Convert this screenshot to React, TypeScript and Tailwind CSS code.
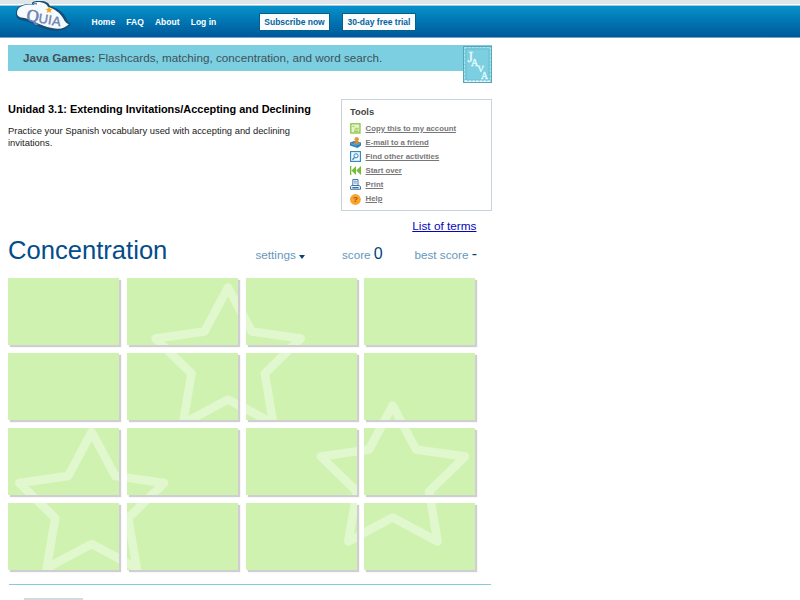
import React from "react";

const STARS = [
  { x: 228, y: 287.5 },
  { x: 91.7, y: 432 },
  { x: 393, y: 405.5 },
];
const COLS = [8, 127, 245.7, 364.4];
const ROWS = [278, 353, 428, 503];

function Logo() {
  return (
    <svg className="absolute left-[14px] top-0" width="60" height="34" viewBox="0 0 60 34">
      <path d="M2 13C2 5 10 4 18 4C18 1 21 1 26 1C32 1 35 3 36 6C46 9 51 14 53 20C54 23 56 23 57 24C52 30 46 32 37 30.5C24 28 16 21 7 20C3 19 2 17 2 13Z" fill="#154f79" />
      <path d="M3 13C3 6 11 4 19 4.500C19 2 23 1.500 27 2.200C31 3 33 4.500 34 7C41 9 46 13 49 18C51 22 53 24 55 24C51 28 46 30 38 28C25 26 17 18 7 17.500C4 17 3 15 3 13Z" fill="#f7fafc" />
      <path d="M19 5C19 3.500 21 3.500 23 4" fill="none" stroke="#154f79" strokeWidth="1" />
      <g fill="#6c84b4" stroke="#6c84b4">
        <text x="12" y="20.5" fontSize="17" fontFamily="Liberation Serif, serif" strokeWidth=".6" transform="rotate(8 12 20)">Q</text>
        <g fontFamily="Liberation Sans, sans-serif" fontSize="13" strokeWidth=".4">
          <text x="24" y="22.500" transform="rotate(9 24 22)">U</text>
          <text x="33.5" y="24" transform="rotate(9 33 24)">I</text>
          <text x="37.5" y="25" transform="rotate(9 37 25)">A</text>
        </g>
      </g>
      <path d="M35 6.500l1 2.300 2.500.1-1.900 1.700.7 2.500-2.300-1.300-2.200 1.300.6-2.500-1.900-1.700 2.500-.1z" fill="#f5a51c" />
    </svg>
  );
}

function JavaStamp() {
  return (
    <svg className="absolute right-0 top-px" width="29" height="37" viewBox="0 0 29 37">
      <rect width="29" height="37" fill="#7bcfe1" />
      <rect x="1.5" y="1.5" width="26" height="34" fill="none" stroke="#a9e4ef" strokeWidth="1.5" strokeDasharray="2.5 1.2" />
      <path d="M2 35H27" stroke="#e9fbff" strokeWidth="2" strokeDasharray="2.5 1.2" />
      <rect x=".5" y=".5" width="28" height="36" fill="none" stroke="#5aa4b8" />
      <rect x="3" y="3" width="23" height="31" fill="none" stroke="#6ab8cb" strokeWidth=".8" />
      <g fill="#e8fcff" stroke="#e8fcff" strokeWidth=".3" fontFamily="Liberation Serif, serif">
        <text x="4.5" y="15.5" fontSize="14">J</text>
        <text x="8" y="20" fontSize="10">A</text>
        <text x="14.500" y="25.500" fontSize="9">V</text>
        <text x="18" y="32.500" fontSize="11" textLength="7" lengthAdjust="spacingAndGlyphs">A</text>
      </g>
    </svg>
  );
}

const icons: Record<string, React.ReactNode> = {
  copy: (
    <g>
      <rect x=".8" y=".8" width="9.2" height="9.2" fill="#e6f5c8" stroke="#7fc241" strokeWidth="1.2" />
      <path d="M2.5 3.5H4.5M5 5.3H8.5M4 7H8.5M4 8.6H8.5" stroke="#8dbb3a" strokeWidth=".8" />
    </g>
  ),
  mail: (
    <g>
      <path d="M0 5.5L4 4L11 5.5V8.5L7.5 11L0 8.5Z" fill="#287fc0" />
      <path d="M1 6.5L6 8.3L10 6.5" stroke="#7dbde6" strokeWidth=".7" fill="none" />
      <circle cx="6.7" cy="2.2" r="2.2" fill="#e99b2f" />
      <path d="M5.5 3.8H8.2L8.8 6.5L6 7.5L2.5 6L5.6 5.6Z" fill="#dc8b25" />
    </g>
  ),
  find: (
    <g fill="none" stroke="#2f84b7">
      <rect x=".6" y=".6" width="9.8" height="9.8" fill="#f1faff" strokeWidth="1.1" />
      <circle cx="6" cy="4.8" r="2.1" />
      <path d="M4.6 6.4L2.5 8.7" strokeWidth="1.3" />
    </g>
  ),
  over: <path d="M0 1H1.3V10H0ZM6 1V10L1.5 5.5ZM11 1V10L6.2 5.5Z" fill="#76bd36" />,
  print: (
    <g fill="#eaf4fb" stroke="#356a9e" strokeWidth=".9">
      <path d="M2.8 .5H8V6.5H2.8Z" />
      <path d="M4 2.3H6.8M4 4H6.8" strokeWidth=".6" />
      <path d="M1.8 6.5H9L10.5 7.5V10.3H.5V7.5Z" />
      <path d="M2.3 8.7H8.7" strokeWidth="1.3" />
    </g>
  ),
  help: (
    <g>
      <circle cx="5.4" cy="5.5" r="5.4" fill="#f8a42f" />
      <text x="5.4" y="8.4" textAnchor="middle" fontFamily="Liberation Sans, sans-serif" fontSize="8" fontWeight="bold" fill="#a8500e">?</text>
    </g>
  ),
};

const TOOLS = [
  ["copy", "Copy this to my account"],
  ["mail", "E-mail to a friend"],
  ["find", "Find other activities"],
  ["over", "Start over"],
  ["print", "Print"],
  ["help", "Help"],
];

function Card({ x, y }: { x: number; y: number }) {
  return (
    <div className="h-[67px] w-[111px] bg-[#d0f2b1] shadow-[2px_2px_1px_#d0cdd3]">
      <svg className="block" width="111" height="67" viewBox={`${x} ${y} 111 67`}>
        {STARS.map((s) => (
          <path
            key={s.x}
            transform={`translate(${s.x} ${s.y})`}
            d="M0 0L23.5 44L72.5 51L36.5 86L45 136L0 112L-45 136L-36.5 86L-72.5 51L-23.5 44Z"
            fill="none"
            stroke="#e1f7cd"
            strokeWidth="8.5"
            strokeLinejoin="round"
          />
        ))}
      </svg>
    </div>
  );
}

export default function App() {
  return (
    <div className="h-[600px] w-[800px] overflow-hidden bg-white font-['Liberation_Sans',Arial,sans-serif] text-black">
      <header className="relative h-[38px] border-t-4 border-[#e0e5e9]">
        <div className="mt-px flex h-[33px] items-center border-y border-t-[#9acde1] border-b-[#70a4c5] bg-linear-to-b from-[#0792cb] to-[#005999] pl-[91.5px] text-[8.5px] font-bold text-white">
          <nav className="flex w-[167.5px] gap-[11.2px] pt-px">
            <a>Home</a>
            <a>FAQ</a>
            <a>About</a>
            <a>Log in</a>
          </nav>
          <div className="flex gap-[12px] text-[#05639a]">
            <a className="flex h-[18px] w-[71px] items-center justify-center whitespace-nowrap border border-[#056187] bg-[#fafdff] pt-px">Subscribe now</a>
            <a className="flex h-[18px] w-[74px] items-center justify-center whitespace-nowrap border border-[#056187] bg-[#fafdff] pt-px">30-day free trial</a>
          </div>
        </div>
        <div className="absolute left-0 -top-1">
          <Logo />
        </div>
      </header>

      <main className="w-[492px] pl-2">
        <div className="relative mt-[7px] h-[53.5px]">
          <div className="h-[26px] bg-[#7bcfe0] pl-[15px] text-[11.7px] leading-[25px] text-[#40515a]">
            <b>Java Games:</b> Flashcards, matching, concentration, and word search.
          </div>
          <JavaStamp />
        </div>

        <div className="flex justify-between">
          <section className="w-[320px] pt-[3px]">
            <h1 className="whitespace-nowrap text-[10.93px] font-bold leading-[14px]">Unidad 3.1: Extending Invitations/Accepting and Declining</h1>
            <p className="mt-[9px] w-[300px] text-[9.4px] leading-[12px] text-[#222]">
              Practice your Spanish vocabulary used with accepting and declining
              <br />
              invitations.
            </p>
          </section>
          <aside className="h-[112px] w-[151px] border border-[#c9d3dc] pl-2 pt-[6px]">
            <h2 className="mb-[4px] text-[9.3px] font-bold leading-[12px] text-[#444]">Tools</h2>
            {TOOLS.map(([icon, label]) => (
              <div key={icon} className="flex h-[14.1px] items-center gap-[4.5px]">
                <svg width="11" height="11" viewBox="0 0 11 11">{icons[icon]}</svg>
                <a className="whitespace-nowrap text-[7.8px] font-bold leading-[12px] text-[#777] underline">{label}</a>
              </div>
            ))}
          </aside>
        </div>

        <div className="mt-[7px] flex justify-end pr-[15.5px]">
          <a className="text-[11.8px] leading-[16px] text-[#0505bb] underline">List of terms</a>
        </div>

        <div className="flex h-[44px] w-[469px] items-start">
          <h2 className="w-[247.5px] text-[25.6px] leading-[33px] text-[#044d8a]">Concentration</h2>
          <div className="flex flex-1 items-baseline pt-[10px] text-[11.7px] leading-[20px] text-[#6697bd]">
            <span className="flex w-[86.5px] items-baseline gap-[3px]">
              settings
              <svg width="6" height="4" viewBox="0 0 6 4"><path d="M0 0H6L3 4Z" fill="#044477" /></svg>
            </span>
            <span>score <span className="text-[16px] text-[#044477]">0</span></span>
            <span className="ml-auto">best score <span className="text-[16px] text-[#044477]">-</span></span>
          </div>
        </div>

        <div className="grid grid-cols-[repeat(4,111px)] gap-x-[7.8px] gap-y-2">
          {ROWS.map((y) => COLS.map((x) => <Card key={`${x}-${y}`} x={x} y={y} />))}
        </div>

        <footer className="ml-px mr-px mt-[14px] border-t border-[#86cbd9] pl-[15px] pt-[13px]">
          <div className="h-5 w-[59px] bg-[#d5d9df]" />
        </footer>
      </main>
    </div>
  );
}
